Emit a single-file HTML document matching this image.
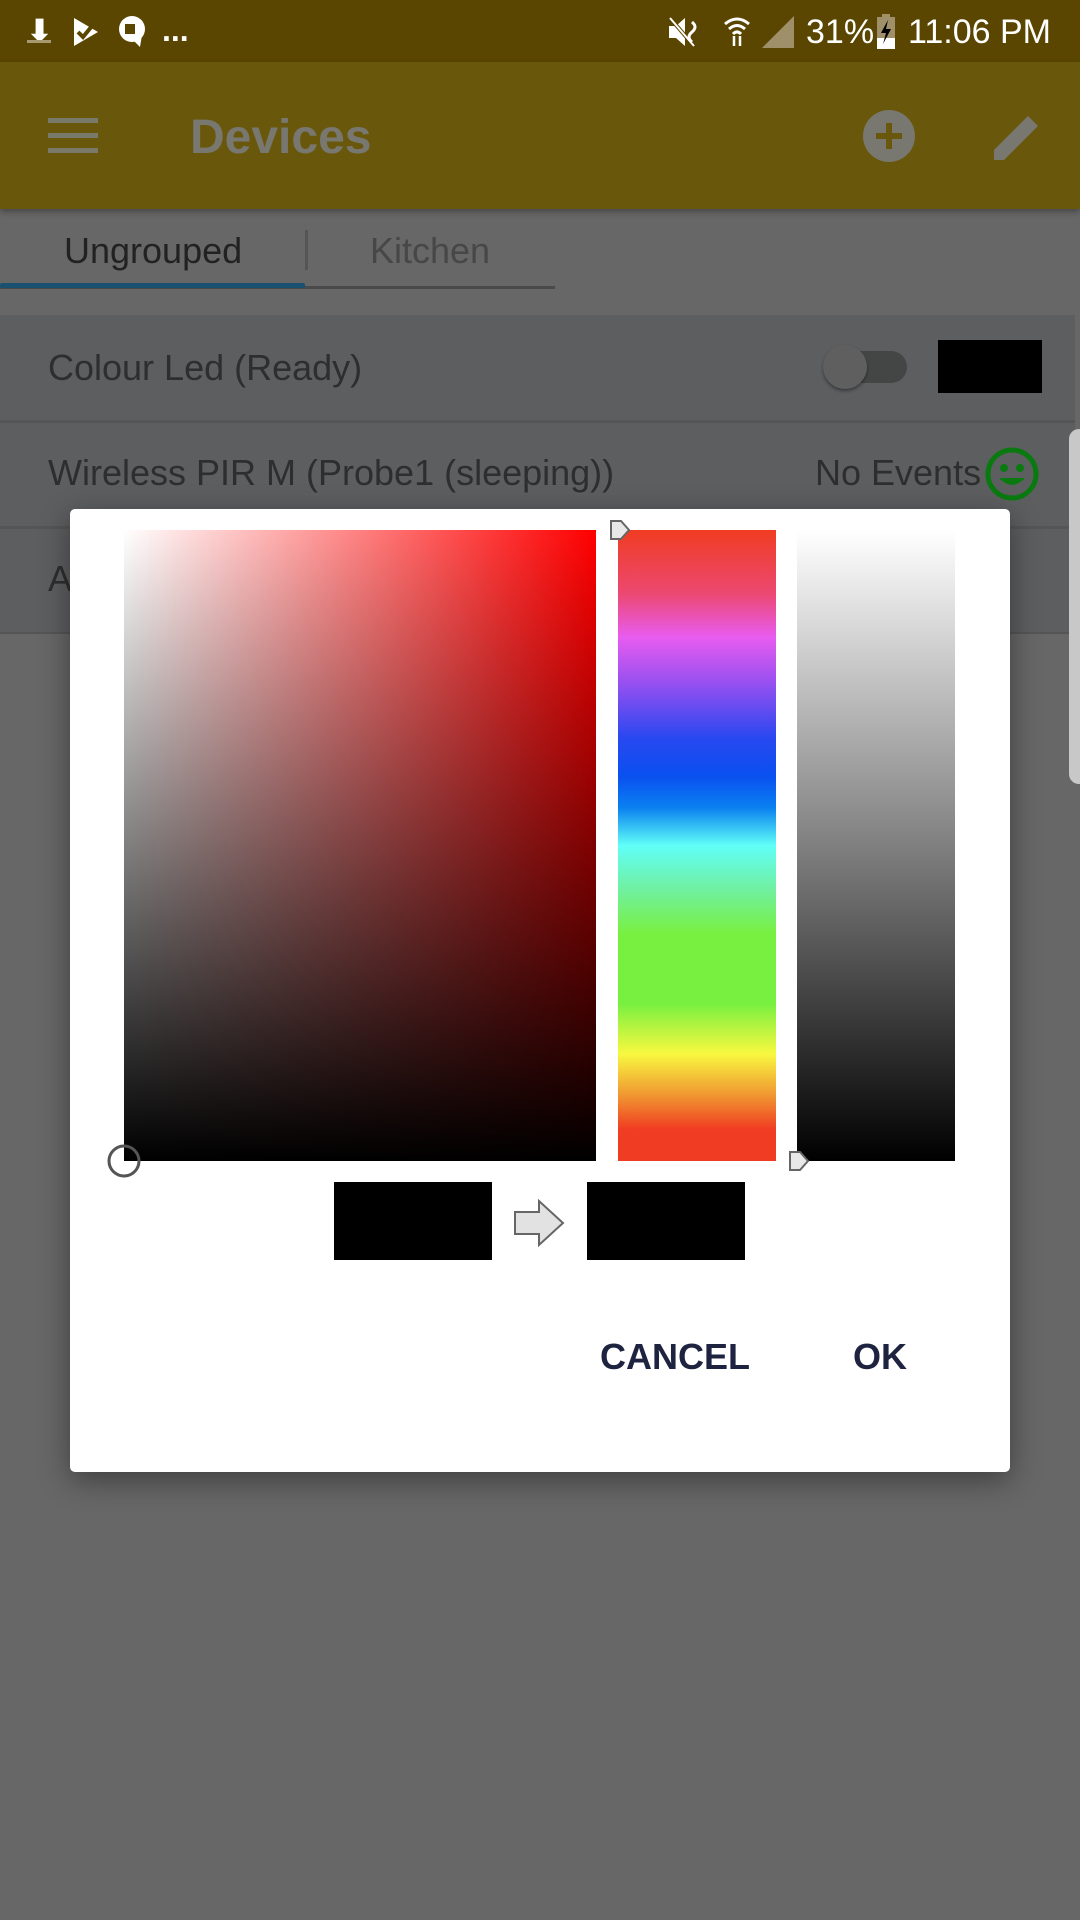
<!DOCTYPE html>
<html><head><meta charset="utf-8"><style>
*{margin:0;padding:0;box-sizing:border-box}
body{width:1080px;height:1920px;background:#676767;position:relative;overflow:hidden;font-family:"Liberation Sans",sans-serif}
.a{position:absolute}
</style></head><body>
<div class="a" style="left:0;top:0;width:1080px;height:62px;background:#5a4600"></div>
<div class="a" style="left:0;top:62px;width:1080px;height:147px;background:#69580c;box-shadow:0 3px 6px rgba(0,0,0,.3)"></div>
<!-- status icons -->
<div class="a" style="left:27px;top:14px;color:#fff;font-size:30px;font-weight:bold">⬇</div>
<div class="a" style="left:27px;top:40px;width:24px;height:3px;background:#a89a70"></div>
<svg class="a" style="left:72px;top:16px" width="28" height="32"><path d="M2 2 L26 16 L2 30 Z" fill="#fff"/><path d="M6 16 l5 5 l9 -11" stroke="#5a4600" stroke-width="4" fill="none"/></svg>
<svg class="a" style="left:118px;top:15px" width="30" height="34"><circle cx="14" cy="14" r="13" fill="#fff"/><path d="M14 24 L22 32 L24 20Z" fill="#fff"/><rect x="7" y="9" width="10" height="10" fill="#5a4600"/></svg>
<div class="a" style="left:162px;top:12px;color:#fff;font-size:32px;font-weight:bold">...</div>
<svg class="a" style="left:666px;top:14px" width="40" height="36"><path d="M3 12 L10 12 L19 4 L19 32 L10 24 L3 24Z" fill="#fff"/><path d="M4 4 L28 32" stroke="#5a4600" stroke-width="4"/><path d="M4 4 L28 32" stroke="#fff" stroke-width="2"/><path d="M26 8 q6 5 0 10 q-6 5 0 10" stroke="#fff" stroke-width="3" fill="none"/></svg>
<svg class="a" style="left:722px;top:14px" width="30" height="34"><path d="M3 10 Q15 0 27 10 M7 15 Q15 8 23 15 M11 20 Q15 16 19 20" stroke="#fff" stroke-width="3" fill="none"/><path d="M12 22 v10 M18 22 v10" stroke="#fff" stroke-width="2.5"/></svg>
<svg class="a" style="left:760px;top:14px" width="36" height="36"><path d="M2 34 L34 2 L34 34Z" fill="#a0906a"/></svg>
<div class="a" style="left:806px;top:13px;color:#fff;font-size:34px">31%</div>
<svg class="a" style="left:876px;top:14px" width="20" height="36"><rect x="1" y="3" width="18" height="32" fill="#a0906a"/><rect x="6" y="0" width="8" height="4" fill="#a0906a"/><rect x="1" y="24" width="18" height="11" fill="#fff"/><path d="M12 6 L5 19 L10 19 L7 30 L15 15 L10 15Z" fill="#000"/></svg>
<div class="a" style="left:908px;top:13px;color:#fff;font-size:34px">11:06 PM</div>
<!-- app bar -->
<div class="a" style="left:48px;top:118px;width:50px;height:5px;background:#7a7a6a;box-shadow:0 15px 0 #7a7a6a,0 30px 0 #7a7a6a"></div>
<div class="a" style="left:190px;top:110px;font-size:48px;font-weight:bold;color:#787770">Devices</div>
<div class="a" style="left:863px;top:110px;width:52px;height:52px;border-radius:50%;background:#787770"></div>
<div class="a" style="left:876px;top:133px;width:26px;height:6px;background:#69580c"></div>
<div class="a" style="left:886px;top:123px;width:6px;height:26px;background:#69580c"></div>
<svg class="a" style="left:990px;top:110px" width="54" height="54"><path d="M4 50 L4 40 L38 6 L48 16 L14 50Z" fill="#787770"/></svg>
<!-- tabs -->
<div class="a" style="left:64px;top:230px;font-size:36px;color:#222">Ungrouped</div>
<div class="a" style="left:305px;top:230px;width:3px;height:40px;background:#555"></div>
<div class="a" style="left:370px;top:230px;font-size:36px;color:#474747">Kitchen</div>
<div class="a" style="left:0;top:286px;width:555px;height:3px;background:#4a4a4a"></div>
<div class="a" style="left:0;top:283px;width:305px;height:5px;background:#1a5070;border-radius:2px"></div>
<!-- rows -->
<div class="a" style="left:0;top:315px;width:1075px;height:105px;background:#5d5e60"></div>
<div class="a" style="left:0;top:420px;width:1075px;height:3px;background:#555"></div>
<div class="a" style="left:0;top:423px;width:1075px;height:103px;background:#5d5e60"></div>
<div class="a" style="left:0;top:526px;width:1075px;height:3px;background:#555"></div>
<div class="a" style="left:0;top:529px;width:1075px;height:103px;background:#5d5e60"></div>
<div class="a" style="left:0;top:632px;width:1075px;height:2px;background:#555"></div>
<div class="a" style="left:48px;top:347px;font-size:36px;color:#2e2e2e">Colour Led (Ready)</div>
<div class="a" style="left:845px;top:351px;width:62px;height:32px;border-radius:16px;background:#444645"></div>
<div class="a" style="left:823px;top:345px;width:44px;height:44px;border-radius:50%;background:#5f5f5f;box-shadow:0 2px 3px rgba(0,0,0,.4)"></div>
<div class="a" style="left:938px;top:340px;width:104px;height:53px;background:#000"></div>
<div class="a" style="left:48px;top:452px;font-size:36px;color:#2e2e2e">Wireless PIR M (Probe1 (sleeping))</div>
<div class="a" style="left:815px;top:452px;font-size:36px;color:#2e2e2e">No Events</div>
<svg class="a" style="left:984px;top:446px" width="56" height="56"><circle cx="28" cy="28" r="24" fill="none" stroke="#0a7a10" stroke-width="5"/><circle cx="20" cy="22" r="4" fill="#0a7a10"/><circle cx="36" cy="22" r="4" fill="#0a7a10"/><path d="M15 32 Q28 46 41 32Z" fill="#0a7a10"/></svg>
<div class="a" style="left:48px;top:558px;font-size:36px;color:#2e2e2e">A</div>
<div class="a" style="left:1069px;top:429px;width:20px;height:355px;border-radius:12px;background:#c8c8c8"></div>
<!-- dialog -->
<div class="a" style="left:70px;top:509px;width:940px;height:963px;background:#fff;border-radius:5px;box-shadow:0 8px 30px rgba(0,0,0,.4)"></div>
<div class="a" style="left:124px;top:530px;width:472px;height:631px;background:linear-gradient(to right,#fff,#f00)"></div>
<div class="a" style="left:124px;top:530px;width:472px;height:631px;background:linear-gradient(to bottom,rgba(0,0,0,0),#000)"></div>
<div class="a" style="left:618px;top:530px;width:158px;height:631px;background:linear-gradient(to bottom,#f03c22 0%,#ec4870 10%,#e85cf0 17%,#9a50f0 24%,#2848f0 33%,#0a50f0 39%,#0a80f0 44%,#60fff8 50%,#70f0a0 57%,#78f040 64%,#78f040 75%,#f8f840 83%,#f09030 90%,#f03c22 95%,#f03c22 100%)"></div>
<div class="a" style="left:797px;top:530px;width:158px;height:631px;background:linear-gradient(to bottom,#fff,#000)"></div>
<svg class="a" style="left:106px;top:1143px" width="36" height="36"><circle cx="18" cy="18" r="15" fill="none" stroke="#555" stroke-width="3"/></svg>
<svg class="a" style="left:609px;top:519px" width="22" height="22"><path d="M2 2 L12 2 L20 11 L12 20 L2 20Z" fill="#e8e8e8" stroke="#666" stroke-width="2"/></svg>
<svg class="a" style="left:788px;top:1150px" width="22" height="22"><path d="M2 2 L12 2 L20 11 L12 20 L2 20Z" fill="#e8e8e8" stroke="#666" stroke-width="2"/></svg>
<div class="a" style="left:334px;top:1182px;width:158px;height:78px;background:#000"></div>
<svg class="a" style="left:512px;top:1198px" width="56" height="50"><path d="M3 14 L27 14 L27 3 L51 25 L27 47 L27 36 L3 36Z" fill="#e2e2e2" stroke="#666" stroke-width="2"/></svg>
<div class="a" style="left:587px;top:1182px;width:158px;height:78px;background:#000"></div>
<div class="a" style="left:600px;top:1336px;font-size:36px;font-weight:bold;color:#1e2440">CANCEL</div>
<div class="a" style="left:853px;top:1336px;font-size:36px;font-weight:bold;color:#1e2440">OK</div>
</body></html>
